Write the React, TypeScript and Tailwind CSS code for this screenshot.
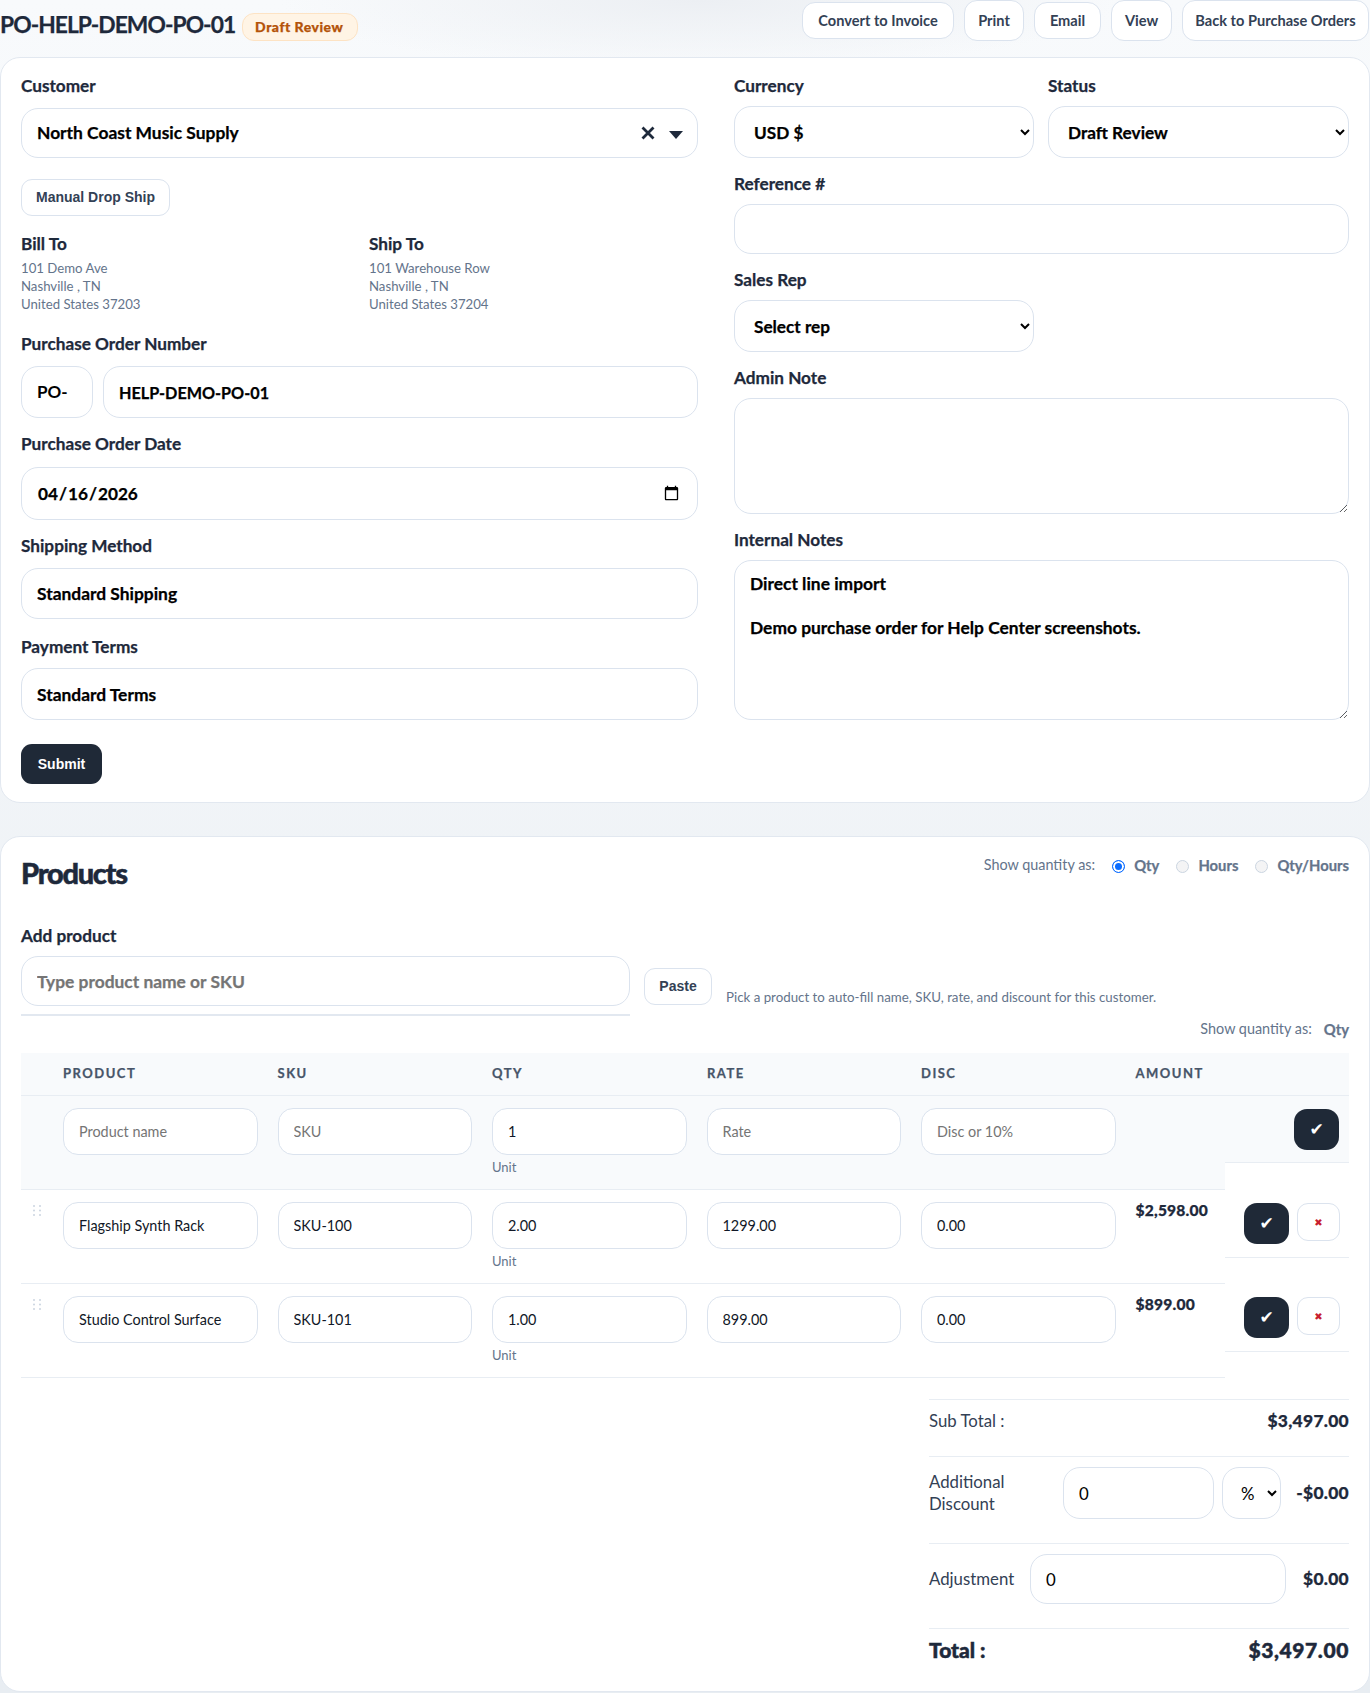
import { ReactNode } from "react";

const sans = "font-['Lato','Noto_Sans',sans-serif]";
const field = "border border-[#dbe3ee] rounded-[17px] bg-white px-[15px] text-black outline-none";
// Lato tops out at bold here, the stroke thickens the heavier text
const heavy = "[-webkit-text-stroke:0.25px_currentColor]";
const heavier = "[-webkit-text-stroke:0.5px_currentColor]";

function Label({ children, className = "" }: { children: ReactNode; className?: string }) {
  return <div className={`h-[20px] text-[17.2px] leading-[20px] font-bold text-[#1e293b] ${heavy} ${className}`}>{children}</div>;
}

function ToolBtn({ children, w, tall }: { children: ReactNode; w: string; tall?: boolean }) {
  return (
    <a className={`flex items-center justify-center border border-[#dbe3ee] rounded-[13px] bg-white text-[14.6px] font-bold text-[#334155] ${w} ${tall ? "h-[41px]" : "h-[37px]"}`}>
      {children}
    </a>
  );
}

function TextField({ value, className = "", size = "text-[17.4px]" }: { value: string; className?: string; size?: string }) {
  return <input readOnly value={value} className={`${field} ${size} font-bold ${heavy} ${className}`} />;
}

function NativeSelect({ value, className = "" }: { value: string; className?: string }) {
  return (
    <select defaultValue={value} className={`${field} pr-1 text-[17.2px] font-bold ${heavy} ${className}`}>
      <option>{value}</option>
    </select>
  );
}

function Radio({ label, checked, className }: { label: string; checked?: boolean; className: string }) {
  return (
    <label className={`flex items-center ${className}`}>
      <input
        type="radio"
        name="qty"
        defaultChecked={checked}
        className="appearance-none w-[13px] h-[13px] mt-[3px] rounded-full border border-[#cbd5e1] bg-[#f4f4f5] checked:border-[#0a6cff] checked:bg-[#0a6cff] checked:shadow-[inset_0_0_0_2px_white]"
      />
      <span className={`ml-[9px] text-[14.8px] font-bold text-[#64748b] ${heavy}`}>{label}</span>
    </label>
  );
}

function Cell({ value, placeholder, unit }: { value?: string; placeholder?: string; unit?: boolean }) {
  return (
    <div className="w-[194.5px] shrink-0">
      <input
        readOnly
        value={value ?? ""}
        placeholder={placeholder}
        className="w-full h-[47px] border border-[#dbe3ee] rounded-[15px] bg-white px-[15px] text-[14.4px] text-[#111827] outline-none placeholder:text-[#757575]"
      />
      {unit && <div className="mt-[3px] text-[13px] leading-[18px] text-[#64748b]">Unit</div>}
    </div>
  );
}

function Grip() {
  return (
    <svg width="10" height="13" viewBox="0 0 10 13" className="fill-[#cbd5e1]">
      <circle cx="2" cy="2" r="1" /><circle cx="8" cy="2" r="1" />
      <circle cx="2" cy="6.5" r="1" /><circle cx="8" cy="6.5" r="1" />
      <circle cx="2" cy="11" r="1" /><circle cx="8" cy="11" r="1" />
    </svg>
  );
}

function CheckBtn({ className = "" }: { className?: string }) {
  return (
    <button className={`flex items-center justify-center w-[45px] h-[41px] rounded-[13px] bg-[#1f2937] text-white text-[17px] font-['DejaVu_Sans',sans-serif] ${className}`}>
      ✔
    </button>
  );
}

function ProductRow({ name, sku, qty, rate, amount }: { name: string; sku: string; qty: string; rate: string; amount: string }) {
  return (
    <div className="flex h-[94px]">
      <div className="flex w-[1204px] border-b border-[#e8edf3]">
        <div className="w-[42px] pl-[11px] pt-[14px]"><Grip /></div>
        <div className="flex gap-[20px] pt-[12px]">
          <Cell value={name} />
          <Cell value={sku} />
          <Cell value={qty} unit />
          <Cell value={rate} />
          <Cell value={"0.00"} />
        </div>
        <div className={`ml-[20px] pt-[10px] text-[15.6px] leading-[20px] font-black tracking-[0.2px] text-[#1e293b] ${heavy}`}>{amount}</div>
      </div>
      <div className="w-[124px] h-[68px] border-b border-[#e8edf3] flex gap-[8px] pl-[19px] pt-[13px]">
        <CheckBtn />
        <button className="flex items-center justify-center w-[43px] h-[38px] border border-[#dbe3ee] rounded-[11px] bg-white text-[#c81e2e] text-[10px] font-['DejaVu_Sans',sans-serif]">
          ✖
        </button>
      </div>
    </div>
  );
}

export default function App() {
  return (
    <div className={`w-[1370px] h-[1693px] overflow-hidden bg-[radial-gradient(ellipse_420px_70px_at_700px_0,#eceff3,transparent),linear-gradient(to_bottom,#f8fafc,#e8edf2)] ${sans}`}>
      {/* page header */}
      <div className="flex h-[57px]">
        <div className="flex items-start pt-[11px]">
          <h1 className={`text-[22.8px] leading-[26px] font-bold tracking-[-0.95px] text-[#1e293b] ${heavy}`}>PO-HELP-DEMO-PO-01</h1>
          <span className={`flex items-center justify-center ml-[7px] mt-[2px] pb-[2px] pr-[2px] w-[116px] h-[28px] rounded-[12px] border border-[#fde3c4] bg-[#fff4e5] text-[14px] font-black tracking-[0.5px] text-[#b45309] ${heavy}`}>
            Draft Review
          </span>
        </div>
        <div className="flex items-center gap-[10px] ml-auto mr-px h-[41px]">
          <ToolBtn w="w-[152px]">Convert to Invoice</ToolBtn>
          <ToolBtn w="w-[60px]" tall>Print</ToolBtn>
          <ToolBtn w="w-[67px]">Email</ToolBtn>
          <ToolBtn w="w-[61px]" tall>View</ToolBtn>
          <ToolBtn w="w-[187px]" tall>Back to Purchase Orders</ToolBtn>
        </div>
      </div>

      {/* order form */}
      <div className="h-[746px] border border-[#e2e8f0] rounded-[20px] bg-white px-[20px] pt-[18px] flex gap-[36px]">
        <div className="w-[677px] shrink-0">
          <Label>Customer</Label>
          <div className={`${field} flex items-center h-[50px] mt-[12px] pr-[14px] text-[17.4px] font-bold ${heavy}`}>
            <span>North Coast Music Supply</span>
            <svg width="14" height="14" viewBox="0 0 14 14" className="ml-auto stroke-[#1e293b]" strokeWidth="2.8">
              <path d="M1.5 1.5l11 11M12.5 1.5l-11 11" />
            </svg>
            <svg width="14" height="8" viewBox="0 0 14 8" className="ml-[14px] mt-[3px] fill-[#1e293b]">
              <path d="M0 0h14L7 8z" />
            </svg>
          </div>
          <button className="block mt-[21px] w-[149px] h-[37px] border border-[#dbe3ee] rounded-[11px] bg-white font-['Liberation_Sans',sans-serif] text-[14px] font-bold text-[#334155]">
            Manual Drop Ship
          </button>

          <div className="flex mt-[18px]">
            <div className="w-[348px]">
              <Label>Bill To</Label>
              <div className="mt-[5px] text-[13.2px] leading-[18px] text-[#64748b]">
                <div>101 Demo Ave</div>
                <div>Nashville , TN</div>
                <div>United States 37203</div>
              </div>
            </div>
            <div>
              <Label>Ship To</Label>
              <div className="mt-[5px] text-[13.2px] leading-[18px] text-[#64748b]">
                <div>101 Warehouse Row</div>
                <div>Nashville , TN</div>
                <div>United States 37204</div>
              </div>
            </div>
          </div>

          <Label className="mt-[21px]">Purchase Order Number</Label>
          <div className="flex gap-[10px] mt-[12px]">
            <div className={`${field} flex items-center w-[72px] h-[52px] text-[17px] font-bold text-[#64748b]`}>PO-</div>
            <TextField value="HELP-DEMO-PO-01" size="text-[16.2px]" className="flex-1 h-[52px]" />
          </div>

          <Label className="mt-[16px]">Purchase Order Date</Label>
          <input
            type="date"
            defaultValue="2026-04-16"
            className={`${field} w-full h-[53px] mt-[13px] text-[17.2px] font-bold ${heavy}`}
          />

          <Label className="mt-[16px]">Shipping Method</Label>
          <TextField value="Standard Shipping" className="w-full h-[51px] mt-[12px]" />

          <Label className="mt-[18px]">Payment Terms</Label>
          <TextField value="Standard Terms" className="w-full h-[52px] mt-[11px]" />

          <button className="block mt-[24px] w-[81px] h-[40px] rounded-[11px] bg-[#1f2937] font-['Liberation_Sans',sans-serif] text-[14px] font-bold text-white">
            Submit
          </button>
        </div>

        <div className="flex-1">
          <div className="flex gap-[14px]">
            <div className="w-[300px]">
              <Label>Currency</Label>
              <NativeSelect value="USD $" className="w-full h-[52px] mt-[10px]" />
            </div>
            <div className="flex-1">
              <Label>Status</Label>
              <NativeSelect value="Draft Review" className="w-full h-[52px] mt-[10px]" />
            </div>
          </div>
          <Label className="mt-[16px]">Reference #</Label>
          <TextField value="" className="w-full h-[50px] mt-[10px]" />
          <Label className="mt-[16px]">Sales Rep</Label>
          <NativeSelect value="Select rep" className="w-[300px] h-[52px] mt-[10px]" />
          <Label className="mt-[16px]">Admin Note</Label>
          <textarea readOnly className={`${field} block w-full h-[116px] mt-[10px]`} />
          <Label className="mt-[16px]">Internal Notes</Label>
          <textarea
            readOnly
            value={"Direct line import\n\nDemo purchase order for Help Center screenshots."}
            className={`${field} block w-full h-[160px] mt-[10px] py-[12px] text-[17.4px] leading-[22px] font-bold ${heavy}`}
          />
        </div>
      </div>

      {/* products */}
      <div className="h-[856px] mt-[33px] border border-[#e2e8f0] rounded-[20px] bg-white px-[20px]">
        <div className="flex h-[76px]">
          <h2 className={`mt-[18px] text-[29px] leading-[36px] font-black tracking-[-1.3px] text-[#1e293b] ${heavier}`}>Products</h2>
          <div className="flex items-start ml-auto pt-[17px]">
            <span className="mr-[17px] text-[14.4px] text-[#64748b]">Show quantity as:</span>
            <Radio label="Qty" checked className="" />
            <Radio label="Hours" className="ml-[17px]" />
            <Radio label="Qty/Hours" className="ml-[17px]" />
          </div>
        </div>

        <Label className="mt-[13px]">Add product</Label>
        <div className="flex mt-[10px]">
          <div className="w-[609px]">
            <input
              readOnly
              placeholder="Type product name or SKU"
              className={`${field} w-full h-[50px] text-[17.4px] font-bold placeholder:text-[#757575] ${heavy}`}
            />
            <div className="h-[2px] mt-[8px] bg-[#e2e8f0]" />
          </div>
          <button className="w-[68px] h-[37px] mt-[12px] ml-[14px] border border-[#dbe3ee] rounded-[11px] bg-white font-['Liberation_Sans',sans-serif] text-[14px] font-bold text-[#334155]">
            Paste
          </button>
          <span className="ml-[14px] mt-[33px] text-[13.3px] leading-[16px] text-[#64748b]">
            Pick a product to auto-fill name, SKU, rate, and discount for this customer.
          </span>
        </div>

        <div className="flex justify-end gap-[12px] h-[20px] mt-[3px] text-[14.4px] leading-[20px]">
          <span className="text-[#64748b]">Show quantity as:</span>
          <span className={`font-bold text-[14.8px] text-[#64748b] ${heavy}`}>Qty</span>
        </div>

        {/* product table */}
        <div className="mt-[14px]">
          <div className={`flex items-center h-[43px] bg-[#f8fafc] border-b border-[#e8edf3] pl-[42px] text-[13px] font-bold tracking-[1.5px] text-[#475569] ${heavy}`}>
            <span className="w-[214.5px]">PRODUCT</span>
            <span className="w-[214.5px]">SKU</span>
            <span className="w-[215px]">QTY</span>
            <span className="w-[214px]">RATE</span>
            <span className="w-[214.5px]">DISC</span>
            <span>AMOUNT</span>
          </div>
          <div className="flex h-[94px]">
            <div className="flex w-[1204px] bg-[#f8fafc] border-b border-[#e8edf3] pl-[42px] pt-[12px]">
              <div className="flex gap-[20px]">
                <Cell placeholder="Product name" />
                <Cell placeholder="SKU" />
                <Cell value="1" unit />
                <Cell placeholder="Rate" />
                <Cell placeholder="Disc or 10%" />
              </div>
            </div>
            <div className="w-[124px] h-[67px] bg-[#f8fafc] border-b border-[#e8edf3] pt-[13px] pl-[69px]">
              <CheckBtn />
            </div>
          </div>
          <ProductRow name="Flagship Synth Rack" sku="SKU-100" qty="2.00" rate="1299.00" amount="$2,598.00" />
          <ProductRow name="Studio Control Surface" sku="SKU-101" qty="1.00" rate="899.00" amount="$899.00" />
        </div>

        {/* totals */}
        <div className="w-[420px] ml-auto mt-[21px] text-[16.8px] text-[#334155]">
          <div className="flex items-start justify-between h-[57px] pt-[10px] leading-[22px] border-t border-[#e8edf3]">
            <span>Sub Total :</span>
            <span className={`font-black text-[17.4px] tracking-[0.3px] text-[#1e293b] ${heavy}`}>$3,497.00</span>
          </div>
          <div className="flex items-start h-[87px] pt-[10px] border-t border-[#e8edf3]">
            <div className="flex items-center w-full">
              <span className="w-[134px] leading-[22px]">Additional<br />Discount</span>
              <input readOnly value="0" className={`${field} w-[151px] h-[52px] font-normal`} />
              <select className={`${field} w-[59px] h-[52px] ml-[8px] pl-[14px] pr-0 font-normal`}>
                <option>%</option>
              </select>
              <span className={`ml-auto font-black text-[17.4px] tracking-[0.3px] text-[#1e293b] ${heavy}`}>-$0.00</span>
            </div>
          </div>
          <div className="flex items-start h-[85px] pt-[10px] border-t border-[#e8edf3]">
            <div className="flex items-center w-full">
              <span className="w-[101px]">Adjustment</span>
              <input readOnly value="0" className={`${field} w-[256px] h-[50px] font-normal`} />
              <span className={`ml-auto font-black text-[17.4px] tracking-[0.3px] text-[#1e293b] ${heavy}`}>$0.00</span>
            </div>
          </div>
          <div className={`flex items-center justify-between h-[42px] border-t border-[#e8edf3] text-[21px] font-black text-[#1e293b] ${heavier}`}>
            <span>Total :</span>
            <span className="tracking-[0.6px]">$3,497.00</span>
          </div>
        </div>
      </div>
    </div>
  );
}
